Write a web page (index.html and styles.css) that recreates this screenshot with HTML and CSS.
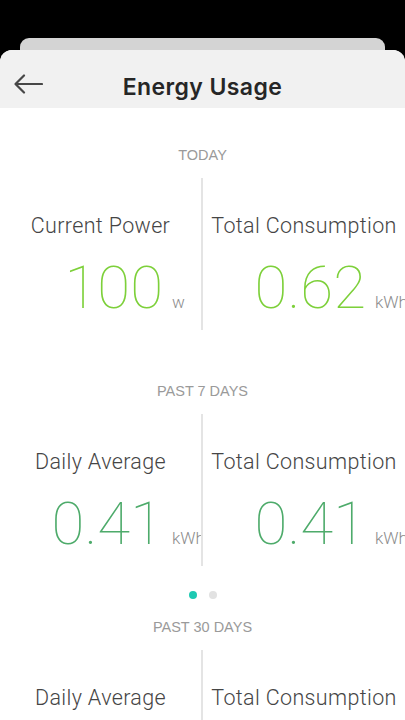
FILE: index.html
```html
<!DOCTYPE html>
<html>
<head>
<meta charset="utf-8">
<link rel="stylesheet" href="styles.css">
</head>
<body>
<div class="screen">
  <div class="back-card"></div>
  <div class="sheet">
    <header class="header">
      <div class="back">
        <svg width="30" height="20" viewBox="0 0 30 20"><path d="M29 10H2.5M11 1.5L2.5 10L11 18.5" fill="none" stroke="#474747" stroke-width="2.2" stroke-linecap="round" stroke-linejoin="round"/></svg>
      </div>
      <h1 class="title">Energy Usage</h1>
      <div></div>
    </header>
    <main class="content">
      <section class="period">
        <div class="period-label">TODAY</div>
        <div class="stats">
          <div class="stat">
            <div class="stat-label">Current Power</div>
            <div class="stat-value lime"><span class="num">100</span><span class="unit">w</span></div>
          </div>
          <div class="divider"></div>
          <div class="stat">
            <div class="stat-label">Total Consumption</div>
            <div class="stat-value lime"><span class="num">0.62</span><span class="unit">kWh</span></div>
          </div>
        </div>
      </section>
      <section class="period">
        <div class="period-label">PAST 7 DAYS</div>
        <div class="stats">
          <div class="stat">
            <div class="stat-label">Daily Average</div>
            <div class="stat-value green"><span class="num">0.41</span><span class="unit">kWh</span></div>
          </div>
          <div class="divider"></div>
          <div class="stat">
            <div class="stat-label">Total Consumption</div>
            <div class="stat-value green"><span class="num">0.41</span><span class="unit">kWh</span></div>
          </div>
        </div>
        <div class="dots"><span class="dot active"></span><span class="dot"></span></div>
      </section>
      <section class="period">
        <div class="period-label">PAST 30 DAYS</div>
        <div class="stats">
          <div class="stat">
            <div class="stat-label">Daily Average</div>
            <div class="stat-value green"><span class="num">0.41</span><span class="unit">kWh</span></div>
          </div>
          <div class="divider"></div>
          <div class="stat">
            <div class="stat-label">Total Consumption</div>
            <div class="stat-value green"><span class="num">0.41</span><span class="unit">kWh</span></div>
          </div>
        </div>
      </section>
    </main>
  </div>
</div>
</body>
</html>
```
FILE: styles.css
```css
* { box-sizing: border-box; }
html, body { margin: 0; padding: 0; }
body {
  background: #000;
  width: 405px;
  height: 720px;
  overflow: hidden;
  font-family: "Liberation Sans", Arial, sans-serif;
}
.screen {
  padding-top: 38px;
}
.back-card {
  height: 12px;
  margin: 0 20px;
  background: #d4d4d4;
  border-radius: 9px 9px 0 0;
}
.sheet {
  background: #fff;
  border-radius: 12px 12px 0 0;
  overflow: hidden;
  height: 670px;
}
.header {
  height: 58px;
  background: #f1f1f1;
  display: grid;
  grid-template-columns: 1fr auto 1fr;
  align-items: center;
  padding: 10px 0 0 13px;
}
.back { display: flex; align-items: center; }
.title {
  margin: 0;
  font-family: "Inter", sans-serif;
  font-weight: 600;
  font-size: 23px;
  color: #262626;
  letter-spacing: 0.4px;
  padding-top: 6px;
  margin-left: -13px;
}
.content {
  padding-top: 38px;
}
.period-label {
  text-align: center;
  font-size: 14.5px;
  line-height: 18px;
  color: #9a9a9a;
}
.stats {
  display: grid;
  grid-template-columns: 201px 2px 1fr;
  margin-top: 14px;
  height: 152px;
}
.divider {
  background: #e4e4e4;
}
.stat {
  overflow: hidden;
  padding-top: 36px;
}
.stat-label {
  text-align: center;
  font-family: "Roboto", sans-serif;
  font-weight: 300;
  font-size: 21.5px;
  letter-spacing: 0.35px;
  line-height: 24px;
  color: #454545;
  white-space: nowrap;
}
.stat-value {
  display: flex;
  align-items: baseline;
  margin-top: 20px;
  white-space: nowrap;
}
.num {
  flex: 0 0 163px;
  text-align: right;
  font-family: "Roboto", sans-serif;
  font-weight: 100;
  font-size: 60px;
  line-height: 60px;
}
.unit {
  margin-left: 9px;
  font-family: "Roboto", sans-serif;
  font-weight: 300;
  font-size: 17px;
  color: #8c8c8c;
}
.lime { color: #7dd03a; }
.green { color: #4eab6b; }
.period { padding-bottom: 52px; }
.period:nth-child(2) { padding-bottom: 0; }
.dots {
  display: flex;
  justify-content: center;
  gap: 12px;
  margin: 25px 0 19px;
}
.dot {
  width: 8px;
  height: 8px;
  border-radius: 50%;
  background: #e2e2e2;
}
.dot.active { background: #1ec9b2; }
```
